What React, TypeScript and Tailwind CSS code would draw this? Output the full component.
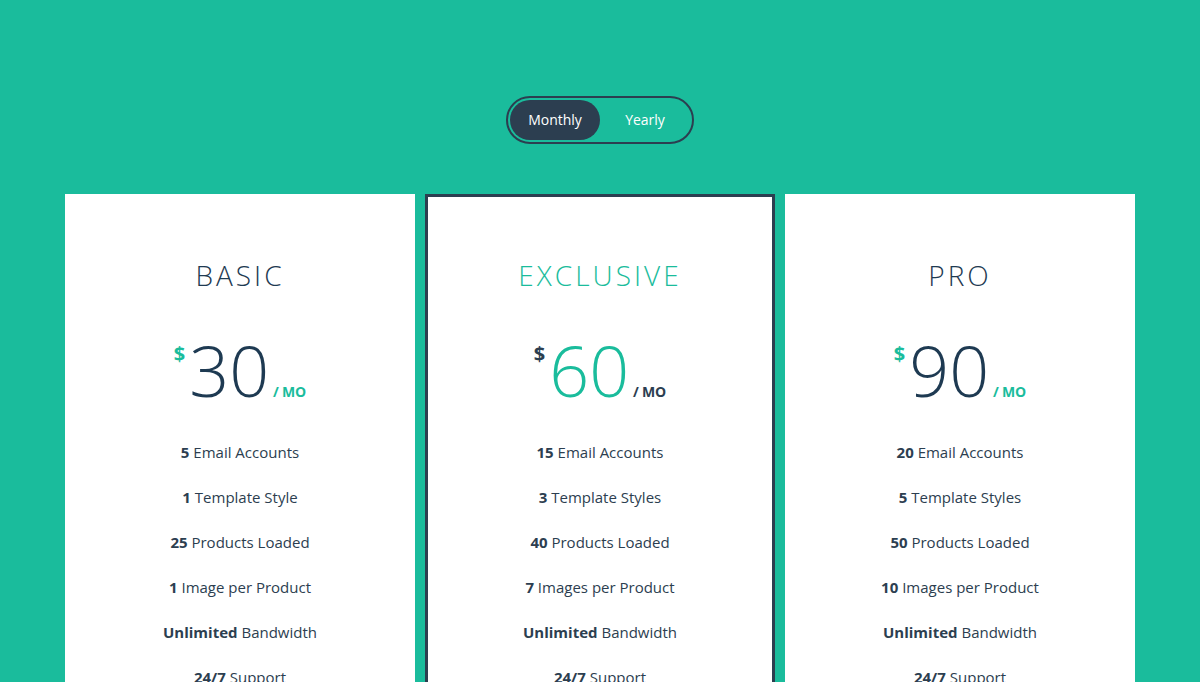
import React from "react";

type Plan = {
  name: string;
  price: string;
  featured?: boolean;
  features: [string, string][];
};

const plans: Plan[] = [
  {
    name: "BASIC",
    price: "30",
    features: [
      ["5", "Email Accounts"],
      ["1", "Template Style"],
      ["25", "Products Loaded"],
      ["1", "Image per Product"],
      ["Unlimited", "Bandwidth"],
      ["24/7", "Support"],
    ],
  },
  {
    name: "EXCLUSIVE",
    price: "60",
    featured: true,
    features: [
      ["15", "Email Accounts"],
      ["3", "Template Styles"],
      ["40", "Products Loaded"],
      ["7", "Images per Product"],
      ["Unlimited", "Bandwidth"],
      ["24/7", "Support"],
    ],
  },
  {
    name: "PRO",
    price: "90",
    features: [
      ["20", "Email Accounts"],
      ["5", "Template Styles"],
      ["50", "Products Loaded"],
      ["10", "Images per Product"],
      ["Unlimited", "Bandwidth"],
      ["24/7", "Support"],
    ],
  },
];

function Card({ plan }: { plan: Plan }) {
  const f = plan.featured;
  return (
    <div
      className={
        "w-[350px] h-[520px] bg-white flex flex-col items-center " +
        (f ? "border-[3px] border-[#2c3e50] pt-[64px]" : "pt-[67px]")
      }
    >
      <div
        className={
          "text-[28px] leading-[28px] tracking-[3px] font-light " +
          (f ? "text-[#1abc9c]" : "text-[#1e3a52]")
        }
      >
        {plan.name}
      </div>
      <div className="flex mt-[46px] h-[70px]">
        <span
          className={
            "text-[20px] leading-[20px] font-bold mt-[9px] mr-[4px] " +
            (f ? "text-[#2c3e50]" : "text-[#1abc9c]")
          }
        >
          $
        </span>
        <span
          className={
            "text-[70px] leading-[70px] font-light " +
            (f ? "text-[#1abc9c]" : "text-[#1e3a52]")
          }
        >
          {plan.price}
        </span>
        <span
          className={
            "self-end text-[14px] leading-[14px] font-bold ml-[4px] mb-[6px] " +
            (f ? "text-[#2c3e50]" : "text-[#1abc9c]")
          }
        >
          /<span className="ml-[3px]">MO</span>
        </span>
      </div>
      <div className="mt-[25px] flex flex-col items-center">
        {plan.features.map(([b, t], i) => (
          <div key={i} className="text-[15px] leading-[45px] text-[#2c3e50]">
            <span className="font-bold">{b}</span> {t}
          </div>
        ))}
      </div>
    </div>
  );
}

export default function App() {
  return (
    <div
      className="w-full h-[682px] overflow-hidden bg-[#1abc9c] flex flex-col items-center pt-[96px]"
      style={{ fontFamily: '"Open Sans", "Liberation Sans", sans-serif' }}
    >
      <div className="flex border-2 border-[#2c3e50] rounded-full p-[2px]">
        <button className="w-[90px] h-[40px] rounded-full bg-[#2c3e50] text-white text-[14px] leading-[39px] font-medium pb-[1px]">
          Monthly
        </button>
        <button className="w-[90px] h-[40px] rounded-full text-white text-[14px] leading-[39px] font-medium pb-[1px]">
          Yearly
        </button>
      </div>
      <div className="flex gap-[10px] mt-[50px]">
        {plans.map((p) => (
          <Card key={p.name} plan={p} />
        ))}
      </div>
    </div>
  );
}
